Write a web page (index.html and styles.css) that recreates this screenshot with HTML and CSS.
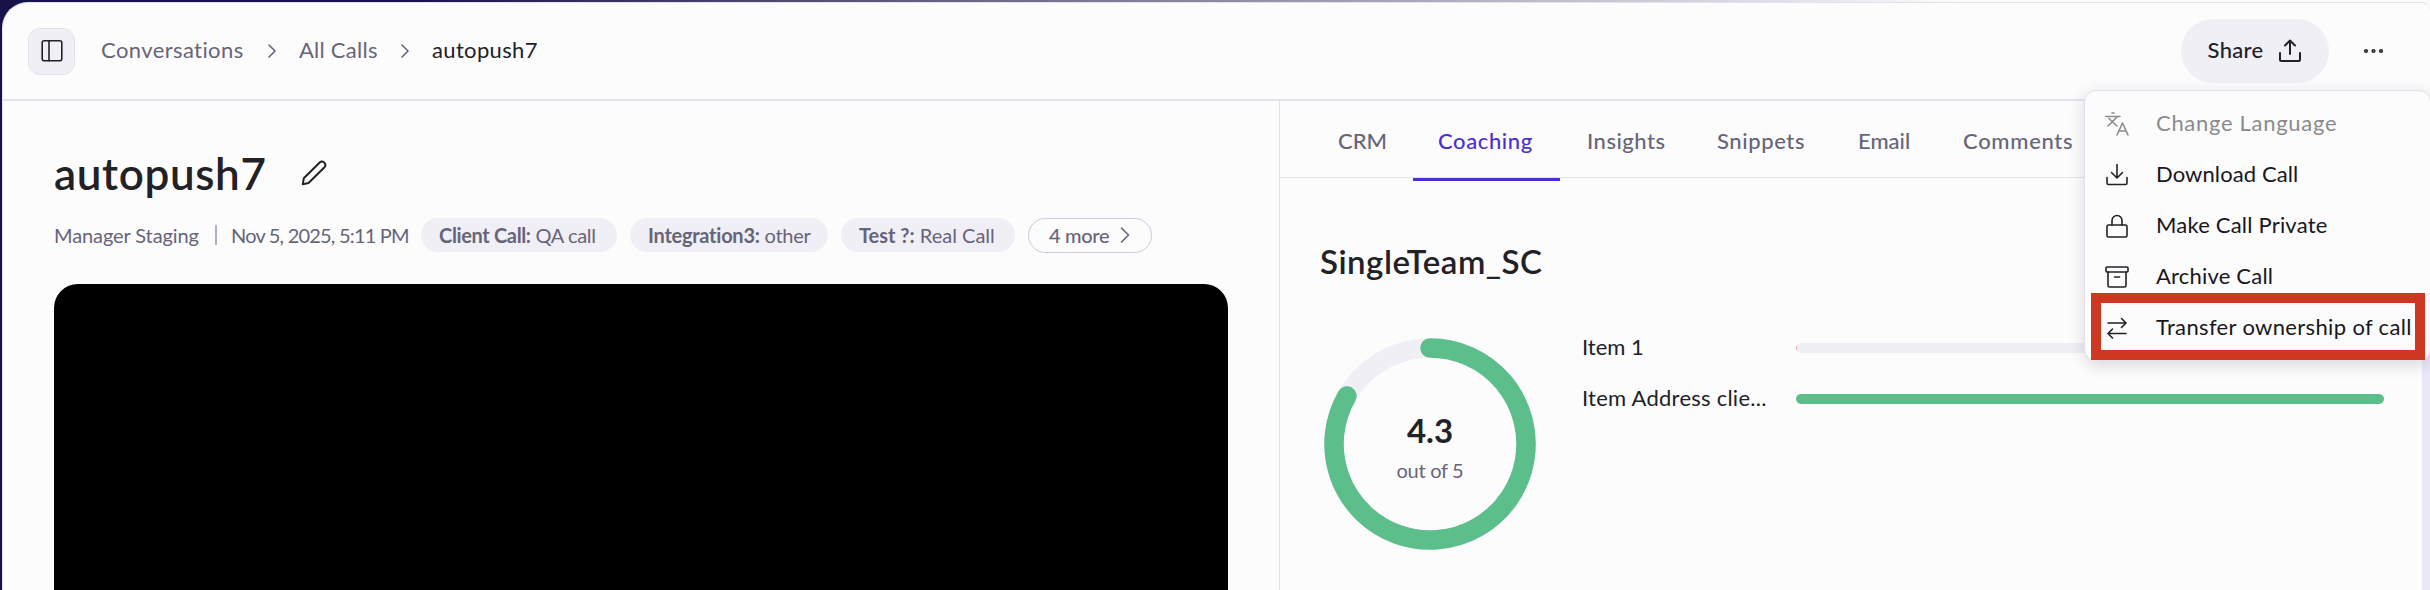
FILE: index.html
```
<!DOCTYPE html>
<html lang="en">
<head>
    <meta charset="UTF-8">
    <meta name="viewport" content="width=device-width, initial-scale=1.0">
    <title>autopush7 - Conversations</title>
    <link rel="stylesheet" href="styles.css">
</head>
<body>
    <div class="app">
        <header class="topbar">
            <button class="sidebar-toggle">
                <svg width="24" height="24" viewBox="0 0 24 24"><rect x="2.2" y="1.8" width="19.6" height="20" rx="2"/><path d="M9 1.8v20"/></svg>
            </button>
            <nav class="breadcrumbs">
                <span class="crumb crumb-root">Conversations</span>
                <svg class="crumb-arrow" width="8" height="14" viewBox="0 0 8 14"><path d="M1 1l6 6-6 6"/></svg>
                <span class="crumb crumb-all">All Calls</span>
                <svg class="crumb-arrow" width="8" height="14" viewBox="0 0 8 14"><path d="M1 1l6 6-6 6"/></svg>
                <span class="crumb crumb-current">autopush7</span>
            </nav>
            <div class="topbar-actions">
                <button class="share">
                    <span class="share-label">Share</span>
                    <svg width="24" height="24" viewBox="0 0 24 24"><path d="M12 15V2M7 6.500L12 1.500 17 6.500M2 14V20.500A1.500 1.500 0 0 0 3.500 22h17a1.500 1.500 0 0 0 1.500-1.500V14"/></svg>
                </button>
                <button class="more-button">
                    <svg width="22" height="6" viewBox="0 0 22 6"><circle cx="3" cy="3" r="1.300"/><circle cx="10.500" cy="3" r="1.300"/><circle cx="18" cy="3" r="1.300"/></svg>
                </button>
            </div>
        </header>

        <main class="content">
            <section class="call">
                <div class="call-title">
                    <h1>autopush7</h1>
                    <svg width="26" height="26" viewBox="0 0 26 26"><path d="M1.800 24.200L2.800 18.200 18.700 2.500a3 3 0 0 1 4.400 0l.4.400a3 3 0 0 1 0 4.400L7.500 23z"/></svg>
                </div>
                <div class="call-meta">
                    <span class="owner">Manager Staging</span>
                    <span class="separator"></span>
                    <span class="date">Nov 5, 2025, 5:11 PM</span>
                    <span class="chip chip-client"><span><b>Client Call:</b> QA call</span></span>
                    <span class="chip chip-integration"><span><b>Integration3:</b> other</span></span>
                    <span class="chip chip-test"><span><b>Test ?:</b> Real Call</span></span>
                    <button class="chip chip-more">
                        <span>4 more</span>
                        <svg width="10" height="16" viewBox="0 0 10 16"><path d="M1.500 1l7 7-7 7"/></svg>
                    </button>
                </div>
                <div class="video"></div>
            </section>

            <section class="details">
                <nav class="tabs">
                    <a class="tab tab-crm">CRM</a>
                    <a class="tab tab-coaching active">Coaching</a>
                    <a class="tab tab-insights">Insights</a>
                    <a class="tab tab-snippets">Snippets</a>
                    <a class="tab tab-email">Email</a>
                    <a class="tab tab-comments">Comments</a>
                </nav>
                <div class="coaching">
                    <h2>SingleTeam_SC</h2>
                    <div class="scores">
                        <div class="gauge">
                            <svg width="212" height="212" viewBox="0 0 212 212">
                                <circle class="gauge-track" cx="106" cy="106" r="96"/>
                                <path class="gauge-value" d="M106 10A96 96 0 1 1 22.900 58"/>
                            </svg>
                            <div class="gauge-text">
                                <strong>4.3</strong>
                                <span>out of 5</span>
                            </div>
                        </div>
                        <div class="items">
                            <div class="item">
                                <span class="item-name item-first">Item 1</span>
                                <div class="bar"><div class="bar-fill low" style="width: 1px"></div></div>
                            </div>
                            <div class="item">
                                <span class="item-name item-address">Item Address clie...</span>
                                <div class="bar"><div class="bar-fill" style="width: 100%"></div></div>
                            </div>
                        </div>
                    </div>
                </div>
            </section>
            <div class="scrollbar"></div>
        </main>
    </div>

    <div class="menu">
        <div class="menu-item disabled">
            <svg width="24" height="24" viewBox="0 0 24 24"><path d="M1 4.500h14M7 1h2M3 14L12.500 4.500M4 6.500l8 7.500M12 23l5.500-12L23 23M13.800 19h7.500"/></svg>
            <span class="menu-language">Change Language</span>
        </div>
        <div class="menu-item">
            <svg width="24" height="24" viewBox="0 0 24 24"><path d="M12 1.500V15M6.500 9.500L12 15l5.500-5.500M2 14.500V20a1.500 1.500 0 0 0 1.500 1.500h17A1.500 1.500 0 0 0 22 20v-5.500"/></svg>
            <span class="menu-download">Download Call</span>
        </div>
        <div class="menu-item">
            <svg width="24" height="24" viewBox="0 0 24 24"><rect x="2" y="11" width="20" height="12" rx="1.500"/><path d="M7 11V6.500a5 5 0 0 1 10 0V11"/></svg>
            <span class="menu-private">Make Call Private</span>
        </div>
        <div class="menu-item">
            <svg width="24" height="24" viewBox="0 0 24 24"><rect x="1" y="2" width="22" height="5" rx="1"/><path d="M3 7v13.500A1.500 1.500 0 0 0 4.500 22h15a1.500 1.500 0 0 0 1.500-1.500V7M9.500 12h5"/></svg>
            <span class="menu-archive">Archive Call</span>
        </div>
        <div class="menu-item">
            <svg width="24" height="24" viewBox="0 0 24 24"><path d="M3 7h18M16.500 2.500L21 7l-4.500 4.500M21 17.500H3M7.500 13L3 17.500 7.500 22"/></svg>
            <span class="menu-transfer">Transfer ownership of call</span>
        </div>
    </div>
    <div class="highlight"></div>
</body>
</html>
```
FILE: styles.css
```
* {
    margin: 0;
    padding: 0;
    box-sizing: border-box;
}

body {
    width: 2430px;
    height: 590px;
    overflow: hidden;
    position: relative;
    padding: 2px 0 0 2px;
    font-family: Lato, "Open Sans", sans-serif;
    font-size: 22px;
    color: #212126;
    background: linear-gradient(90deg, #17134a 0, #17134a 400px, #8b889c 1200px, #fcfcfc 1960px);
}

button {
    font: inherit;
    color: inherit;
    border: none;
    background: none;
}

svg {
    display: block;
    flex: none;
    fill: none;
    stroke: #212126;
    stroke-width: 1.6;
    stroke-linecap: round;
    stroke-linejoin: round;
}

span, a, h1, h2, strong {
    white-space: nowrap;
}

.app {
    height: 588px;
    background: #fcfcfc;
    border: 1px solid #e3e2ec;
    border-right: none;
    border-bottom: none;
    border-radius: 26px 8px 0 0;
    overflow: hidden;
}

.topbar {
    height: 98px;
    display: flex;
    align-items: center;
    padding: 0 45px 0 25px;
    border-bottom: 2px solid #e4e3ec;
}

.sidebar-toggle {
    width: 47px;
    height: 47px;
    margin-right: 26px;
    display: flex;
    align-items: center;
    justify-content: center;
    background: #f0eff5;
    border: 1px solid #e4e3ec;
    border-radius: 12px;
}

.breadcrumbs {
    display: flex;
    align-items: center;
    color: #67647a;
}

.crumb {
    padding-bottom: 3px;
}

.crumb-root {
    width: 143px;
    letter-spacing: 0.4px;
}

.crumb-all {
    width: 78px;
    letter-spacing: 0.25px;
}

.crumb-arrow {
    stroke: #67647a;
    margin: 0 23px 0 24px;
}

.crumb-current {
    color: #212126;
    letter-spacing: 0.35px;
}

.topbar-actions {
    margin-left: auto;
    display: flex;
    align-items: center;
}

.share {
    width: 148px;
    height: 64px;
    display: flex;
    align-items: center;
    padding-left: 26px;
    gap: 14px;
    background: #f0eff5;
    border-radius: 32px;
    font-weight: 500;
}

.share svg {
    stroke-width: 2;
}

.share-label {
    width: 57px;
    padding-bottom: 3px;
    letter-spacing: 0.3px;
}

.more-button {
    margin-left: 34px;
}

.content {
    display: flex;
    height: 489px;
}

.call {
    width: 1277px;
    padding: 42px 51px 0 51px;
    border-right: 1px solid #e4e3ec;
}

.call-title {
    height: 60px;
    display: flex;
    align-items: center;
    gap: 34px;
}

h1 {
    width: 213px;
    font-size: 44px;
    font-weight: 600;
    line-height: 60px;
    letter-spacing: 0.65px;
}

.call-title svg {
    stroke-width: 2;
}

.call-meta {
    margin-top: 14px;
    height: 36px;
    display: flex;
    align-items: center;
    font-size: 20px;
    color: #67647a;
}

.owner {
    width: 146px;
    letter-spacing: -0.1px;
}

.date {
    width: 177px;
    letter-spacing: -0.8px;
}

.separator {
    width: 2px;
    height: 20px;
    margin: 0 14px 0 15px;
    background: #b3b1bf;
}

.chip {
    height: 34px;
    margin-left: 13px;
    padding-left: 18px;
    display: flex;
    align-items: center;
    background: #f0eff5;
    border-radius: 17px;
}

.chip-client {
    width: 196px;
    letter-spacing: -0.35px;
}

.chip-integration {
    width: 198px;
    letter-spacing: -0.25px;
}

.chip-test {
    width: 174px;
}

.chip-more {
    width: 124px;
    height: 35px;
    padding-left: 20px;
    gap: 11px;
    background: none;
    border: 1px solid #cdcbdd;
    border-radius: 18px;
    font-weight: 500;
    letter-spacing: -0.3px;
}

.chip-more svg {
    stroke: #67647a;
}

.video {
    height: 340px;
    margin-top: 31px;
    background: #000;
    border-radius: 24px;
}

.details {
    flex: 1;
}

.tabs {
    height: 77px;
    display: flex;
    gap: 2px;
    padding-left: 33px;
    border-bottom: 1px solid #e4e3ec;
    color: #67647a;
    font-weight: 500;
}

.tab {
    height: 80px;
    line-height: 79px;
    padding-left: 25px;
}

.tab-crm {
    width: 98px;
}

.tab-coaching {
    width: 147px;
    letter-spacing: 0.6px;
}

.tab-insights {
    width: 128px;
    letter-spacing: 0.5px;
}

.tab-snippets {
    width: 139px;
    letter-spacing: 0.6px;
}

.tab-email {
    width: 103px;
}

.tab-comments {
    letter-spacing: 0.7px;
}

.tab.active {
    color: #4a30d0;
    border-bottom: 3px solid #4a30d0;
}

.coaching {
    padding: 61px 38px 0 40px;
}

h2 {
    font-size: 33px;
    line-height: 44px;
    font-weight: 600;
    letter-spacing: 0.5px;
}

.scores {
    display: flex;
    padding: 55px 0 0 4px;
}

.gauge {
    width: 212px;
    height: 212px;
    display: grid;
}

.gauge svg,
.gauge-text {
    grid-area: 1 / 1;
}

.gauge-track {
    stroke: #f0eff5;
    stroke-width: 19.5;
}

.gauge-value {
    stroke: #5bbe8b;
    stroke-width: 19.5;
}

.gauge-text {
    display: flex;
    flex-direction: column;
    align-items: center;
    padding-top: 72px;
}

.gauge-text strong {
    font-size: 33px;
    line-height: 40px;
}

.gauge-text span {
    font-size: 20px;
    line-height: 24px;
    margin-top: 8px;
    color: #67647a;
    letter-spacing: -0.3px;
}

.items {
    flex: 1;
    margin-left: 46px;
    margin-top: -16px;
}

.item {
    height: 51px;
    display: flex;
    align-items: center;
}

.item-name {
    width: 214px;
    padding-bottom: 2px;
}

.item-address {
    letter-spacing: 0.25px;
}

.bar {
    flex: 1;
    height: 10px;
    background: #f0eff5;
    border-radius: 5px;
    overflow: hidden;
}

.bar-fill {
    height: 10px;
    background: #5bbe8b;
}

.bar-fill.low {
    background: #f0a3ad;
}

.scrollbar {
    width: 8px;
    background: #e9e7f8;
}

/* dropdown opened from the three dots button */
.menu {
    position: absolute;
    left: 2084px;
    top: 90px;
    width: 347px;
    height: 271px;
    padding: 7px 0 0 20px;
    background: #fcfcfc;
    border: 1px solid #e3e2ec;
    border-radius: 12px;
    box-shadow: 0 4px 16px rgba(30, 25, 60, 0.16);
    color: #17171c;
}

.menu-item {
    height: 51.2px;
    display: flex;
    align-items: center;
    gap: 27px;
}

.menu-item span {
    padding-bottom: 3px;
}

.menu-language {
    letter-spacing: 0.7px;
}

.menu-download {
    letter-spacing: 0.1px;
}

.menu-private,
.menu-archive {
    letter-spacing: 0.2px;
}

.menu-transfer {
    letter-spacing: 0.35px;
}

.menu-item.disabled {
    color: #8b8b8d;
}

.menu-item.disabled svg {
    stroke: #8b8b8d;
}

.highlight {
    position: absolute;
    left: 2091px;
    top: 293px;
    width: 334px;
    height: 67px;
    border: 10px solid #cf3820;
}
```
